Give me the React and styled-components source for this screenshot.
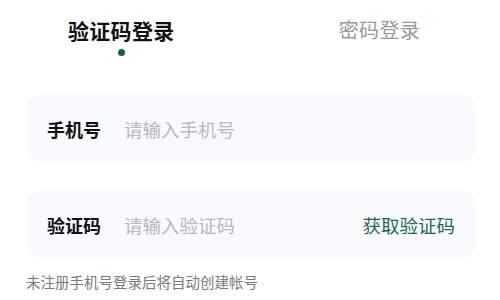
import React from 'react'
import styled, { createGlobalStyle } from 'styled-components'

const GlobalStyle = createGlobalStyle`
  body {
    margin: 0;
    background: #ffffff;
    font-family: "Noto Sans CJK SC", "Noto Sans", sans-serif;
  }
`

const fields = [
  { label: '手机号', placeholder: '请输入手机号' },
  { label: '验证码', placeholder: '请输入验证码', action: '获取验证码' },
]

export default () => (
  <Page>
    <GlobalStyle />
    <Tabs>
      <Tab active>
        验证码登录
        <Dot />
      </Tab>
      <Tab>密码登录</Tab>
    </Tabs>

    <Form>
      {fields.map(f => (
        <Field key={f.label}>
          <Label>{f.label}</Label>
          <Input placeholder={f.placeholder} />
          {f.action && <Action>{f.action}</Action>}
        </Field>
      ))}
    </Form>

    <Hint>未注册手机号登录后将自动创建帐号</Hint>
  </Page>
)

const Page = styled.div`
  width: 500px;
  height: 300px;
  overflow: hidden;
  padding: 0 24px 0 26px;
  box-sizing: border-box;
`
const Tabs = styled.div`
  display: flex;
  justify-content: space-between;
  align-items: flex-start;
  padding: 15px 56px 0 42px;
  height: 95px;
  box-sizing: border-box;
`
const Tab = styled.div`
  display: flex;
  flex-direction: column;
  align-items: center;
  font-size: ${p => (p.active ? '21px' : '20px')};
  font-weight: ${p => (p.active ? 700 : 400)};
  color: ${p => (p.active ? '#111111' : '#9a9a9a')};
  line-height: 30px;
  letter-spacing: 0.3px;
`
const Dot = styled.span`
  width: 7px;
  height: 7px;
  border-radius: 50%;
  background: #13614a;
  margin-top: 4px;
`
const Form = styled.div`
  display: flex;
  flex-direction: column;
  gap: 29px;
`
const Field = styled.div`
  display: flex;
  align-items: center;
  height: 67px;
  padding: 0 21px;
  border-radius: 14px;
  background: #f8fafd;
`
const Label = styled.span`
  width: 77px;
  flex-shrink: 0;
  font-size: 18px;
  font-weight: 700;
  color: #111111;
`
const Input = styled.input`
  flex: 1;
  min-width: 0;
  border: none;
  outline: none;
  background: transparent;
  padding: 0;
  font-family: inherit;
  font-size: 18.5px;
  color: #111111;

  &::placeholder {
    color: #b9b9b9;
  }
`
const Action = styled.span`
  font-size: 18.5px;
  color: #1c6b50;
`
const Hint = styled.div`
  margin-top: 13px;
  font-size: 14.5px;
  color: #7a7a7a;
`
